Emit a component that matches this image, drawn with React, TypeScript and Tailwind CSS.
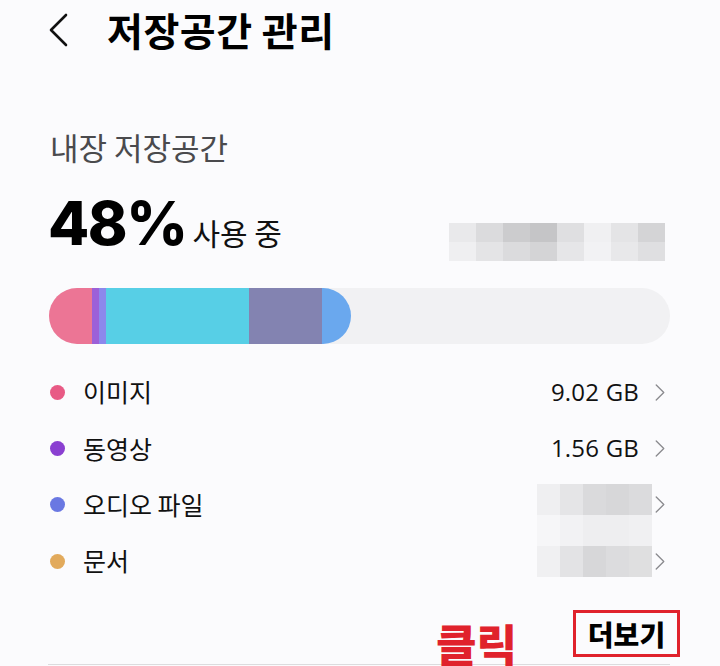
import React from "react";

const KR = { fontFamily: '"Noto Sans CJK KR", "Noto Sans", sans-serif' };
const NUM = { fontFamily: 'Inter, "Noto Sans CJK KR", sans-serif' };
const VAL = { fontFamily: '"Open Sans", Roboto, sans-serif' };

function Chevron({ className }: { className?: string }) {
  return (
    <svg viewBox="0 0 10 18" className={className} fill="none" stroke="currentColor" strokeWidth="1.4" strokeLinecap="round" strokeLinejoin="round">
      <polyline points="1,1 9,9 1,17" />
    </svg>
  );
}

function Blur({ rows, w, h }: { rows: string[][]; w: number; h: number }) {
  return (
    <div className="flex flex-col">
      {rows.map((r, i) => (
        <div key={i} className="flex">
          {r.map((c, j) => (
            <div key={j} style={{ background: c, width: w, height: h }} />
          ))}
        </div>
      ))}
    </div>
  );
}

const items = [
  { label: "이미지", color: "bg-[#e85a85]", value: "9.02 GB" },
  { label: "동영상", color: "bg-[#8a3fd1]", value: "1.56 GB" },
  { label: "오디오 파일", color: "bg-[#6a78e2]", value: null },
  { label: "문서", color: "bg-[#e2aa5c]", value: null },
];

export default function App() {
  return (
    <div className="w-[720px] h-[666px] overflow-hidden bg-[#fbfbfd] text-black relative" style={KR}>
      {/* header */}
      <div className="flex items-center h-[60px] pl-[48px]">
        <svg viewBox="0 0 20 34" className="w-[20px] h-[34px] text-[#111]" fill="none" stroke="currentColor" strokeWidth="2.6" strokeLinecap="round" strokeLinejoin="round">
          <polyline points="18,2 3,17 18,32" />
        </svg>
        <div className="ml-[39px] text-[39px] font-bold leading-none tracking-[0.5px] mt-[-2px]">저장공간 관리</div>
      </div>

      <div className="pl-[50px] pr-[50px]">
        <div className="mt-[69px] text-[31px] leading-[36px] text-[#4a4a4d]">내장 저장공간</div>

        <div className="mt-[32px] flex items-end justify-between h-[52px]">
          <div className="flex items-baseline">
            <span className="ml-[-2px] text-[60px] font-extrabold leading-[52px] tracking-[-1.5px]" style={NUM}>48%</span>
            <span className="ml-[6px] text-[30px] leading-none text-[#111]">사용 중</span>
          </div>
          <div className="mr-[5px] mb-[-12px] opacity-90">
            <Blur
              w={27}
              h={19}
              rows={[
                ["#e8e8ea", "#d8d8da", "#c8c8ca", "#c0c0c2", "#dcdcde", "#efeff1", "#e2e2e4", "#d0d0d2"],
                ["#eeeef0", "#e2e2e4", "#d8d8da", "#d0d0d2", "#e4e4e6", "#f2f2f4", "#e6e6e8", "#dcdcde"],
              ]}
            />
          </div>
        </div>

        {/* bar */}
        <div className="mt-[39px] ml-[-1px] h-[56px] w-[621px] rounded-full bg-[#f1f1f3] flex overflow-hidden">
          <div className="flex h-full w-[302px] rounded-r-full overflow-hidden">
            <div className="w-[43px] bg-[#ec7595]" />
            <div className="w-[7px] bg-[#9c60d8]" />
            <div className="w-[7px] bg-[#8c88ec]" />
            <div className="w-[143px] bg-[#57cfe6]" />
            <div className="w-[73px] bg-[#8383b1]" />
            <div className="flex-1 bg-[#6aa8ee]" />
          </div>
        </div>

        {/* list */}
        <div className="mt-[20px] flex flex-col">
          {items.map((it, i) => (
            <div key={i} className="h-[56.3px] flex items-center">
              <div className={`w-[15px] h-[15px] rounded-full ${it.color}`} />
              <div className="ml-[18px] text-[25px] text-[#111] flex-1">{it.label}</div>
              {it.value && (
                <div className="text-[24px] text-[#111] mr-[16px] tracking-[0.2px]" style={VAL}>{it.value}</div>
              )}
              <Chevron className="w-[10px] h-[17px] text-[#8a8a8e] mr-[5px]" />
            </div>
          ))}
        </div>
      </div>

      {/* blurred values for rows 3,4 */}
      <div className="absolute left-[537px] top-[484px] opacity-95">
        <Blur
          w={23}
          h={31}
          rows={[
            ["#efeff1", "#e4e4e6", "#d9d9db", "#d6d6d8", "#dadadc"],
            ["#f6f6f8", "#f2f2f4", "#eeeef0", "#eeeef0", "#f0f0f2"],
            ["#f0f0f2", "#e2e2e4", "#d6d6d8", "#dbdbdd", "#dededf"],
          ]}
        />
      </div>

      {/* bottom */}
      <div className="absolute left-[48px] right-[50px] top-[664px] h-[1px] bg-[#dcdcde]" />
      <div className="absolute left-[436px] top-[621px] text-[44px] font-black text-[#e0222c] leading-none" style={KR}>클릭</div>
      <div className="absolute left-[573px] top-[610px] w-[107px] h-[47px] border-[3px] border-[#e0222c] flex items-center justify-center">
        <span className="text-[28px] font-black leading-none text-black">더보기</span>
      </div>
    </div>
  );
}
